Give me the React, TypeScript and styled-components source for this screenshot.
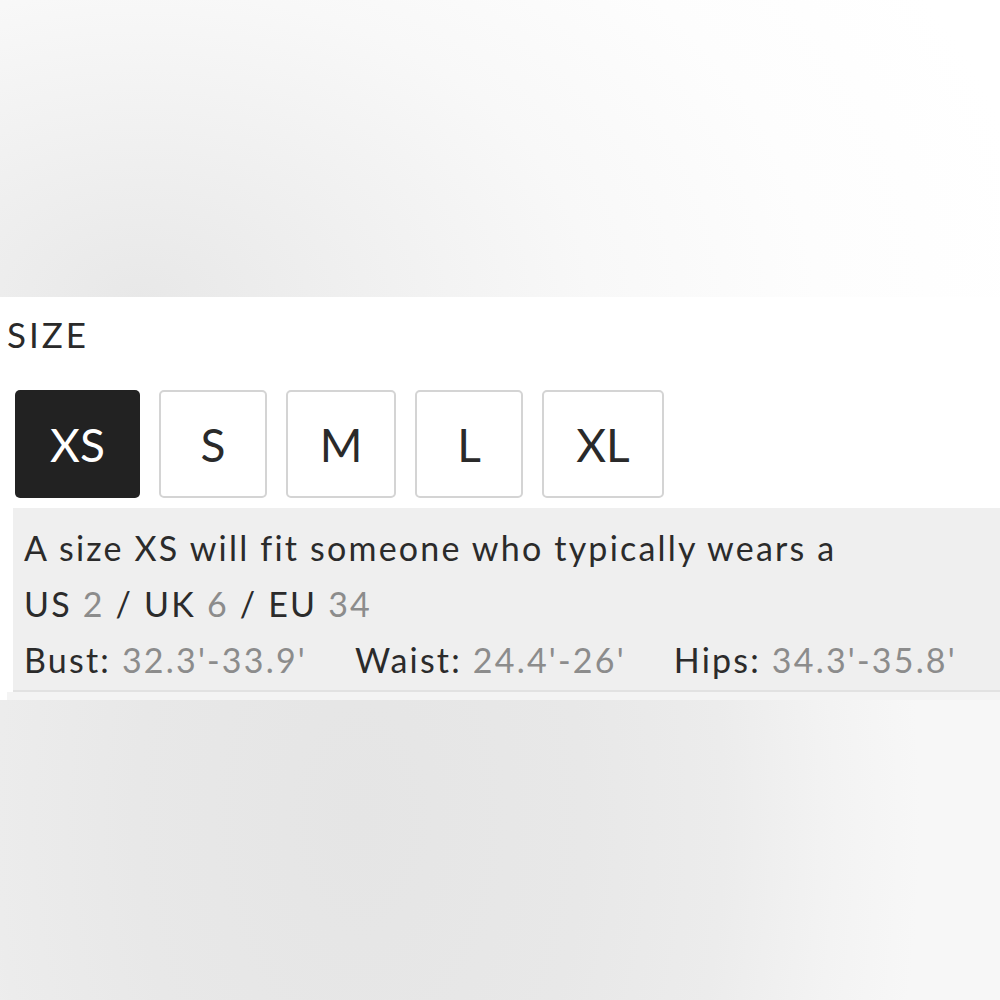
import React from "react";
import styled, { createGlobalStyle } from "styled-components";

const GlobalStyle = createGlobalStyle`
  html, body {
    margin: 0;
    padding: 0;
    background: #ffffff;
  }
  body {
    font-family: Lato, "Liberation Sans", sans-serif;
    color: #2b2b2b;
  }
`;

const Page = styled.div`
  width: 1000px;
  height: 1000px;
  display: flex;
  flex-direction: column;
  overflow: hidden;
`;

const TopBlur = styled.div`
  height: 297px;
  flex-shrink: 0;
  background: radial-gradient(
    ellipse 900px 620px at 140px 300px,
    #e8e8e8 0%,
    #f0f0f0 25%,
    #f8f8f8 50%,
    #fdfdfd 75%,
    #ffffff 100%
  );
`;

const Panel = styled.section`
  height: 403px;
  flex-shrink: 0;
  background: #ffffff;
  display: flex;
  flex-direction: column;
`;

const Title = styled.h2`
  margin: 0;
  padding: 15px 0 0 7px;
  height: 62px;
  box-sizing: border-box;
  font-size: 35px;
  font-weight: 400;
  letter-spacing: 3px;
  line-height: 44px;
  color: #2a2a2a;
`;

const SizeRow = styled.div`
  display: flex;
  gap: 19px;
  padding: 31px 0 0 15px;
`;

const SizeButton = styled.button<{ $active?: boolean; $width: number }>`
  box-sizing: border-box;
  width: ${(p) => p.$width}px;
  height: 108px;
  padding: 0;
  display: flex;
  align-items: center;
  justify-content: center;
  font-family: Lato, "Liberation Sans", sans-serif;
  font-size: 46px;
  font-weight: 400;
  border-radius: 5px;
  cursor: pointer;
  border: ${(p) => (p.$active ? "none" : "2px solid #d4d4d4")};
  background: ${(p) => (p.$active ? "#222222" : "#ffffff")};
  color: ${(p) => (p.$active ? "#ffffff" : "#2a2a2a")};
`;

const InfoBox = styled.div`
  margin: 10px 0 0 13px;
  padding: 12px 0 0 11px;
  height: 184px;
  box-sizing: border-box;
  background: #efefef;
  border-bottom: 2px solid #e2e2e2;
  font-size: 34px;
  line-height: 56px;
  letter-spacing: 2.2px;
`;

const Line = styled.div`
  display: flex;
  gap: 48px;
  white-space: nowrap;
`;

const Dim = styled.span`
  color: #8c8c8c;
`;

const Footer = styled.div`
  height: 8px;
  margin-left: 7px;
  background: #f4f4f4;
`;

const BottomBlur = styled.div`
  flex: 1;
  background: radial-gradient(
    ellipse 560px 900px at 360px 120px,
    #e5e5e5 0%,
    #e8e8e8 40%,
    #ececec 65%,
    #f3f3f3 85%,
    #f7f7f7 100%
  );
`;

const sizes = [
  { label: "XS", width: 125 },
  { label: "S", width: 108 },
  { label: "M", width: 110 },
  { label: "L", width: 108 },
  { label: "XL", width: 122 },
];

const measures = [
  { name: "Bust", value: "32.3'-33.9'" },
  { name: "Waist", value: "24.4'-26'" },
  { name: "Hips", value: "34.3'-35.8'" },
];

export default function App() {
  const selected = "XS";
  return (
    <Page>
      <GlobalStyle />
      <TopBlur />
      <Panel>
        <Title>SIZE</Title>
        <SizeRow>
          {sizes.map((s) => (
            <SizeButton key={s.label} $width={s.width} $active={s.label === selected}>
              {s.label}
            </SizeButton>
          ))}
        </SizeRow>
        <InfoBox>
          <Line>A size XS will fit someone who typically wears a</Line>
          <Line>
            <span>
              US <Dim>2</Dim> / UK <Dim>6</Dim> / EU <Dim>34</Dim>
            </span>
          </Line>
          <Line>
            {measures.map((m) => (
              <span key={m.name}>
                {m.name}: <Dim>{m.value}</Dim>
              </span>
            ))}
          </Line>
        </InfoBox>
        <Footer />
      </Panel>
      <BottomBlur />
    </Page>
  );
}
